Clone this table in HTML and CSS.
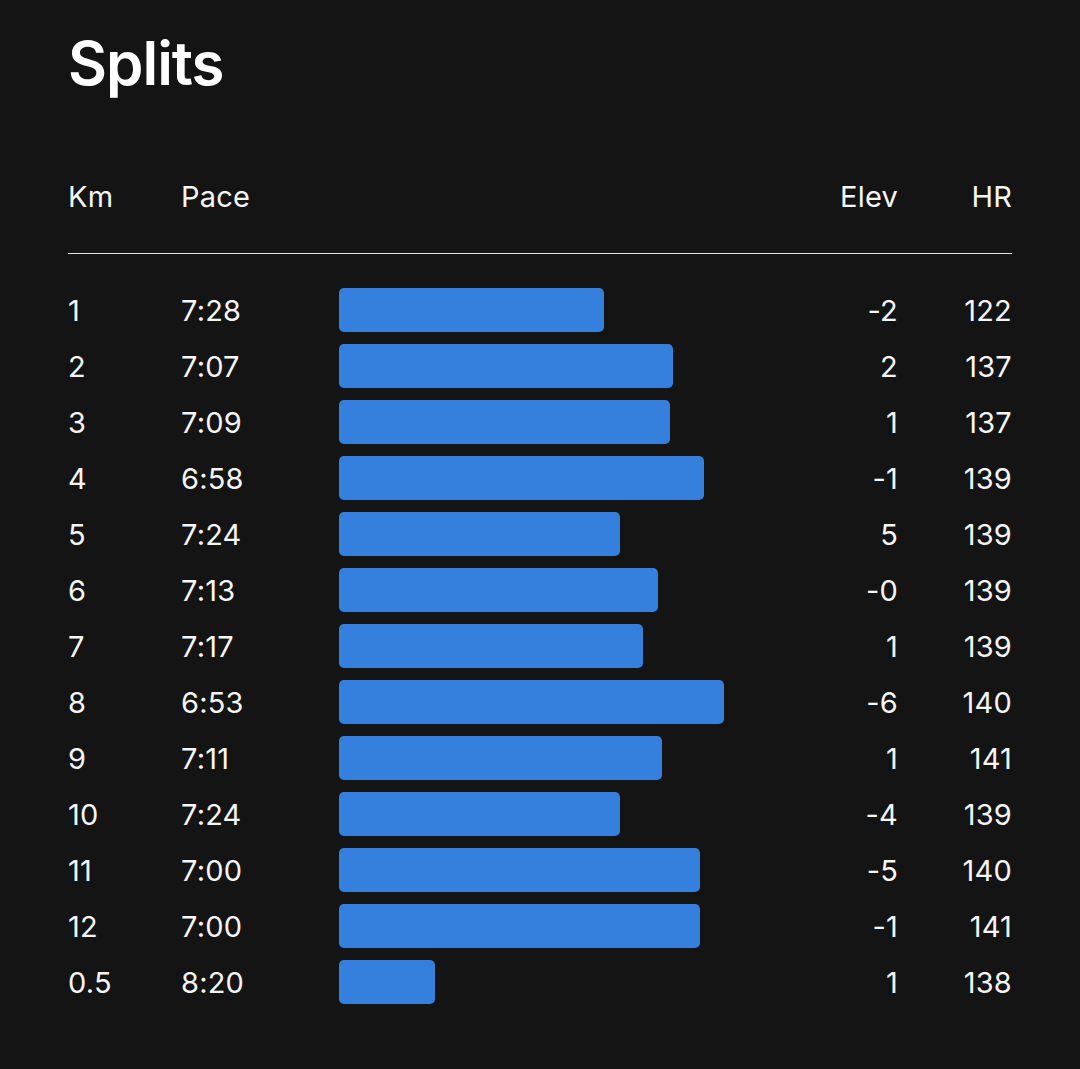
FILE: index.html
```html
<!DOCTYPE html>
<html lang="en">
<head>
<meta charset="utf-8">
<title>Splits</title>
<link rel="stylesheet" href="styles.css">
</head>
<body>
<main class="splits">
  <h1 class="title">Splits</h1>
  <div class="table">
    <div class="row head">
      <span class="km">Km</span><span class="pace">Pace</span><span class="bar-cell"></span><span class="elev">Elev</span><span class="hr">HR</span>
    </div>
    <div class="body">
      <div class="row"><span class="km">1</span><span class="pace">7:28</span><span class="bar-cell"><span class="bar" style="width:265px"></span></span><span class="elev">-2</span><span class="hr">122</span></div>
      <div class="row"><span class="km">2</span><span class="pace">7:07</span><span class="bar-cell"><span class="bar" style="width:334px"></span></span><span class="elev">2</span><span class="hr">137</span></div>
      <div class="row"><span class="km">3</span><span class="pace">7:09</span><span class="bar-cell"><span class="bar" style="width:331px"></span></span><span class="elev">1</span><span class="hr">137</span></div>
      <div class="row"><span class="km">4</span><span class="pace">6:58</span><span class="bar-cell"><span class="bar" style="width:365px"></span></span><span class="elev">-1</span><span class="hr">139</span></div>
      <div class="row"><span class="km">5</span><span class="pace">7:24</span><span class="bar-cell"><span class="bar" style="width:281px"></span></span><span class="elev">5</span><span class="hr">139</span></div>
      <div class="row"><span class="km">6</span><span class="pace">7:13</span><span class="bar-cell"><span class="bar" style="width:319px"></span></span><span class="elev">-0</span><span class="hr">139</span></div>
      <div class="row"><span class="km">7</span><span class="pace">7:17</span><span class="bar-cell"><span class="bar" style="width:304px"></span></span><span class="elev">1</span><span class="hr">139</span></div>
      <div class="row"><span class="km">8</span><span class="pace">6:53</span><span class="bar-cell"><span class="bar" style="width:385px"></span></span><span class="elev">-6</span><span class="hr">140</span></div>
      <div class="row"><span class="km">9</span><span class="pace">7:11</span><span class="bar-cell"><span class="bar" style="width:323px"></span></span><span class="elev">1</span><span class="hr">141</span></div>
      <div class="row"><span class="km">10</span><span class="pace">7:24</span><span class="bar-cell"><span class="bar" style="width:281px"></span></span><span class="elev">-4</span><span class="hr">139</span></div>
      <div class="row"><span class="km">11</span><span class="pace">7:00</span><span class="bar-cell"><span class="bar" style="width:361px"></span></span><span class="elev">-5</span><span class="hr">140</span></div>
      <div class="row"><span class="km">12</span><span class="pace">7:00</span><span class="bar-cell"><span class="bar" style="width:361px"></span></span><span class="elev">-1</span><span class="hr">141</span></div>
      <div class="row"><span class="km">0.5</span><span class="pace">8:20</span><span class="bar-cell"><span class="bar" style="width:96px"></span></span><span class="elev">1</span><span class="hr">138</span></div>
    </div>
  </div>
</main>
</body>
</html>
```

FILE: styles.css
```css
html, body {
  margin: 0;
  padding: 0;
  background: #141414;
}

body {
  color: #f5f5f5;
  font-family: Inter, "Noto Sans", "Liberation Sans", sans-serif;
}

.splits {
  padding: 27px 68px 0 68px;
}

.title {
  margin: 0;
  font-size: 60px;
  line-height: 72px;
  font-weight: 600;
  letter-spacing: -1px;
  color: #ffffff;
}

.table {
  margin-top: 69px;
  font-size: 29px;
  font-weight: 400;
  letter-spacing: 0.2px;
}

.row {
  display: grid;
  grid-template-columns: 113px 158px 1fr 120px 114px;
  align-items: center;
  height: 44px;
}

.head {
  height: 56px;
  padding-bottom: 29px;
  border-bottom: 1px solid #e6e6e6;
}

.body {
  margin-top: 34px;
  display: flex;
  flex-direction: column;
  gap: 12px;
}

.elev, .hr {
  text-align: right;
}

.bar-cell {
  display: flex;
  height: 44px;
  align-items: stretch;
}

.bar {
  display: block;
  background: #3580dc;
  border-radius: 5px;
}
```
